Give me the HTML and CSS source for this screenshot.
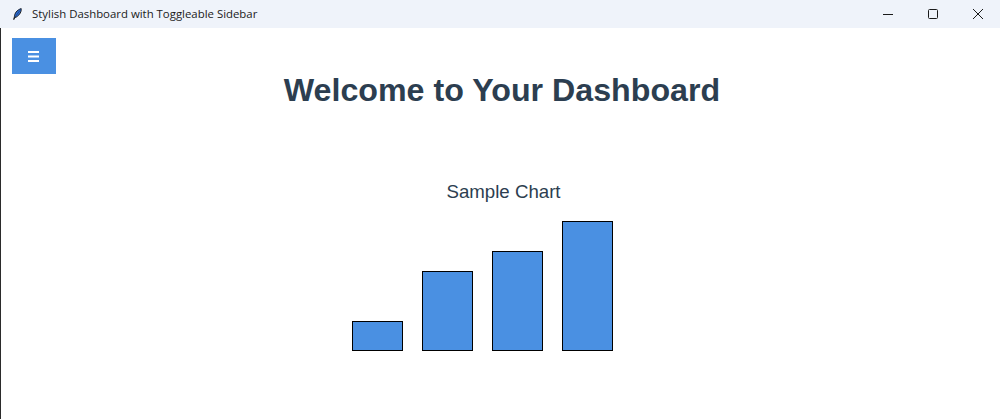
FILE: index.html
```html
<!DOCTYPE html>
<html>
<head>
<meta charset="utf-8">
<title>Stylish Dashboard with Toggleable Sidebar</title>
<link rel="stylesheet" href="styles.css">
</head>
<body>
<div class="window">
  <div class="titlebar">
    <div class="tb-left">
      <svg class="tb-icon" width="9" height="12" viewBox="0 0 9 12">
        <path d="M0.8 11.6 L1.4 8.6 C1.6 5.6 3.6 2 8.2 0.6 C8.6 3.4 6.8 7 3.4 9 C2.8 9.3 2.2 9.5 1.6 9.6 Z" fill="#2f6fd6" stroke="#111" stroke-width="0.9" stroke-linejoin="round"/>
        <path d="M1.6 9.6 L7 2.4" stroke="#0b2a5a" stroke-width="0.6" fill="none"/>
      </svg>
      <span class="tb-title">Stylish Dashboard with Toggleable Sidebar</span>
    </div>
    <div class="tb-controls">
      <span class="ctl">
        <svg width="12" height="12" viewBox="0 0 12 12"><path d="M1 6.5 H11" stroke="#1a1a1a" stroke-width="1"/></svg>
      </span>
      <span class="ctl">
        <svg width="12" height="12" viewBox="0 0 12 12"><rect x="1.5" y="1.5" width="9" height="9" rx="1" fill="none" stroke="#1a1a1a" stroke-width="1"/></svg>
      </span>
      <span class="ctl">
        <svg width="12" height="12" viewBox="0 0 12 12"><path d="M1 1 L11 11 M11 1 L1 11" stroke="#1a1a1a" stroke-width="1"/></svg>
      </span>
    </div>
  </div>
  <div class="content">
    <div class="toolbar">
      <button class="menu-btn" type="button">
        <svg width="11" height="11" viewBox="0 0 11 11">
          <rect x="0" y="0" width="11" height="2" fill="#fff"/>
          <rect x="0" y="4.5" width="11" height="2" fill="#fff"/>
          <rect x="0" y="9" width="11" height="2" fill="#fff"/>
        </svg>
      </button>
    </div>
    <h1 class="heading">Welcome to Your Dashboard</h1>
    <div class="chart">
      <div class="chart-title">Sample Chart</div>
      <div class="bars">
        <div class="bar" style="height:30px"></div>
        <div class="bar" style="height:80px"></div>
        <div class="bar" style="height:100px"></div>
        <div class="bar" style="height:130px"></div>
      </div>
    </div>
  </div>
</div>
</body>
</html>
```
FILE: styles.css
```css
html, body {
  margin: 0;
  padding: 0;
  width: 1000px;
  height: 419px;
  overflow: hidden;
  background: #ffffff;
  font-family: "Liberation Sans", Arial, sans-serif;
}

.window {
  display: flex;
  flex-direction: column;
  width: 1000px;
  height: 419px;
}

.titlebar {
  height: 28px;
  flex: 0 0 28px;
  background: #eff3fa;
  display: flex;
  align-items: center;
  justify-content: space-between;
}

.tb-left {
  display: flex;
  align-items: center;
  padding-left: 13px;
}

.tb-icon {
  display: block;
  margin-top: -1px;
  margin-right: 10px;
}

.tb-title {
  font-family: "Open Sans", "Noto Sans", sans-serif;
  font-size: 11.4px;
  color: #1a1a1a;
  line-height: 16px;
}

.tb-controls {
  display: flex;
  align-items: center;
  height: 28px;
}

.ctl {
  width: 45px;
  height: 28px;
  display: flex;
  align-items: center;
  justify-content: center;
}

.ctl svg {
  display: block;
}

.content {
  flex: 1;
  display: flex;
  flex-direction: column;
  border-left: 1px solid #2b2b2b;
  padding-top: 10px;
}

.toolbar {
  display: flex;
  padding-left: 11px;
  height: 36px;
}

.menu-btn {
  width: 44px;
  height: 36px;
  border: none;
  padding: 0;
  margin: 0;
  background: #4a90e2;
  display: flex;
  align-items: center;
  justify-content: center;
}

.menu-btn svg {
  display: block;
  margin-left: -1px;
}

.heading {
  margin: -2px 0 0 0;
  padding-left: 3px;
  font-size: 32.2px;
  line-height: 36px;
  font-weight: bold;
  color: #2c3e50;
  text-align: center;
}

.chart {
  display: flex;
  flex-direction: column;
  align-items: center;
  margin-top: 73px;
}

.chart-title {
  font-size: 18.67px;
  line-height: 22px;
  color: #2c3e50;
  margin-left: 6px;
}

.bars {
  width: 400px;
  height: 130px;
  margin-top: 18px;
  display: flex;
  align-items: flex-end;
  gap: 19px;
  padding-left: 51px;
  box-sizing: border-box;
}

.bar {
  width: 51px;
  box-sizing: border-box;
  background: #4a90e2;
  border: 1px solid #000;
}
```
